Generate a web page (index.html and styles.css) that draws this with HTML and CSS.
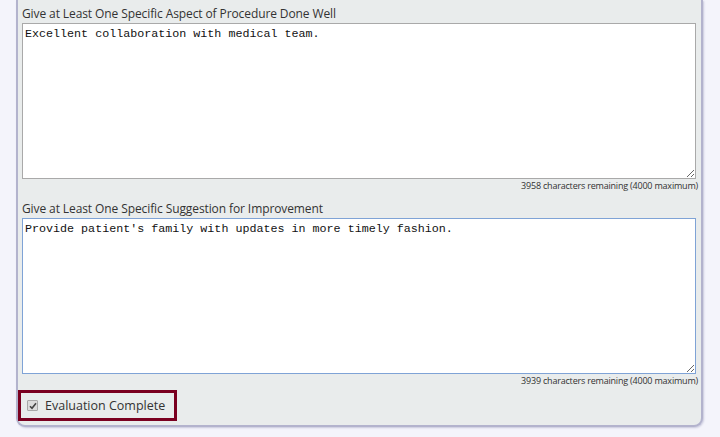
FILE: index.html
```html
<html>
  <head>
    <link rel="stylesheet" href="styles.css">
  </head>
  <body>
  <div class="panel">
    <div class="field">
      <label class="caption" for="well">Give at Least One Specific Aspect of Procedure Done Well</label>
      <textarea id="well" class="notes">Excellent collaboration with medical team.</textarea>
      <div class="counter">3958 characters remaining (4000 maximum)</div>
    </div>
    <div class="field">
      <label class="caption" for="improve">Give at Least One Specific Suggestion for Improvement</label>
      <textarea id="improve" class="notes focused">Provide patient's family with updates in more timely fashion.</textarea>
      <div class="counter">3939 characters remaining (4000 maximum)</div>
    </div>
    <div class="complete">
      <span class="tick">
        <svg width="8" height="8" viewBox="0 0 8 8"><path d="M1 4.2 L3 6.3 L7 1.2" fill="none" stroke="#444" stroke-width="1.6"/></svg>
      </span>
      <span>Evaluation Complete</span>
    </div>
  </div>
  </body>
</html>
```

FILE: styles.css
```css
body {
  margin: 0;
  background: #f4f4fb;
  font-family: "Open Sans", "Noto Sans", sans-serif;
  color: #333;
}

.panel {
  margin-left: 16px;
  width: 676px;
  background: #e9ecec;
  border: 2px solid #b3b3cd;
  border-top: none;
  border-radius: 0 0 9px 9px;
  padding: 5px 3px 3px 4px;
  box-shadow: 1px 1px 2px #c8c8dc;
}

.field {
  display: flex;
  flex-direction: column;
}

.caption {
  font-size: 12px;
  line-height: 18px;
  letter-spacing: -0.1px;
}

.notes {
  display: block;
  width: 674px;
  height: 156px;
  margin: 0;
  padding: 3px 2px;
  box-sizing: border-box;
  border: 1px solid #a9a9a9;
  background: #fff;
  font-family: "Liberation Mono", "Courier New", monospace;
  font-size: 11.7px;
  line-height: 14px;
  color: #111;
  outline: none;
}

.notes.focused {
  border-color: #7fa3d6;
}

.counter {
  text-align: right;
  font-size: 9px;
  line-height: 14px;
  margin-bottom: 7px;
  letter-spacing: -0.2px;
}

.field + .field .counter {
  margin-bottom: 2px;
}

.complete {
  display: inline-flex;
  align-items: center;
  gap: 7px;
  margin-left: -4px;
  border: 3px solid #7a0020;
  padding: 0 9px 0 6px;
  height: 25px;
  font-size: 12.5px;
  margin-bottom: 1px;
}

.tick {
  display: flex;
  align-items: center;
  justify-content: center;
  width: 9px;
  height: 9px;
  border: 1px solid #a8a8a8;
  background: #dcdcdc;
  border-radius: 1px;
}
```
